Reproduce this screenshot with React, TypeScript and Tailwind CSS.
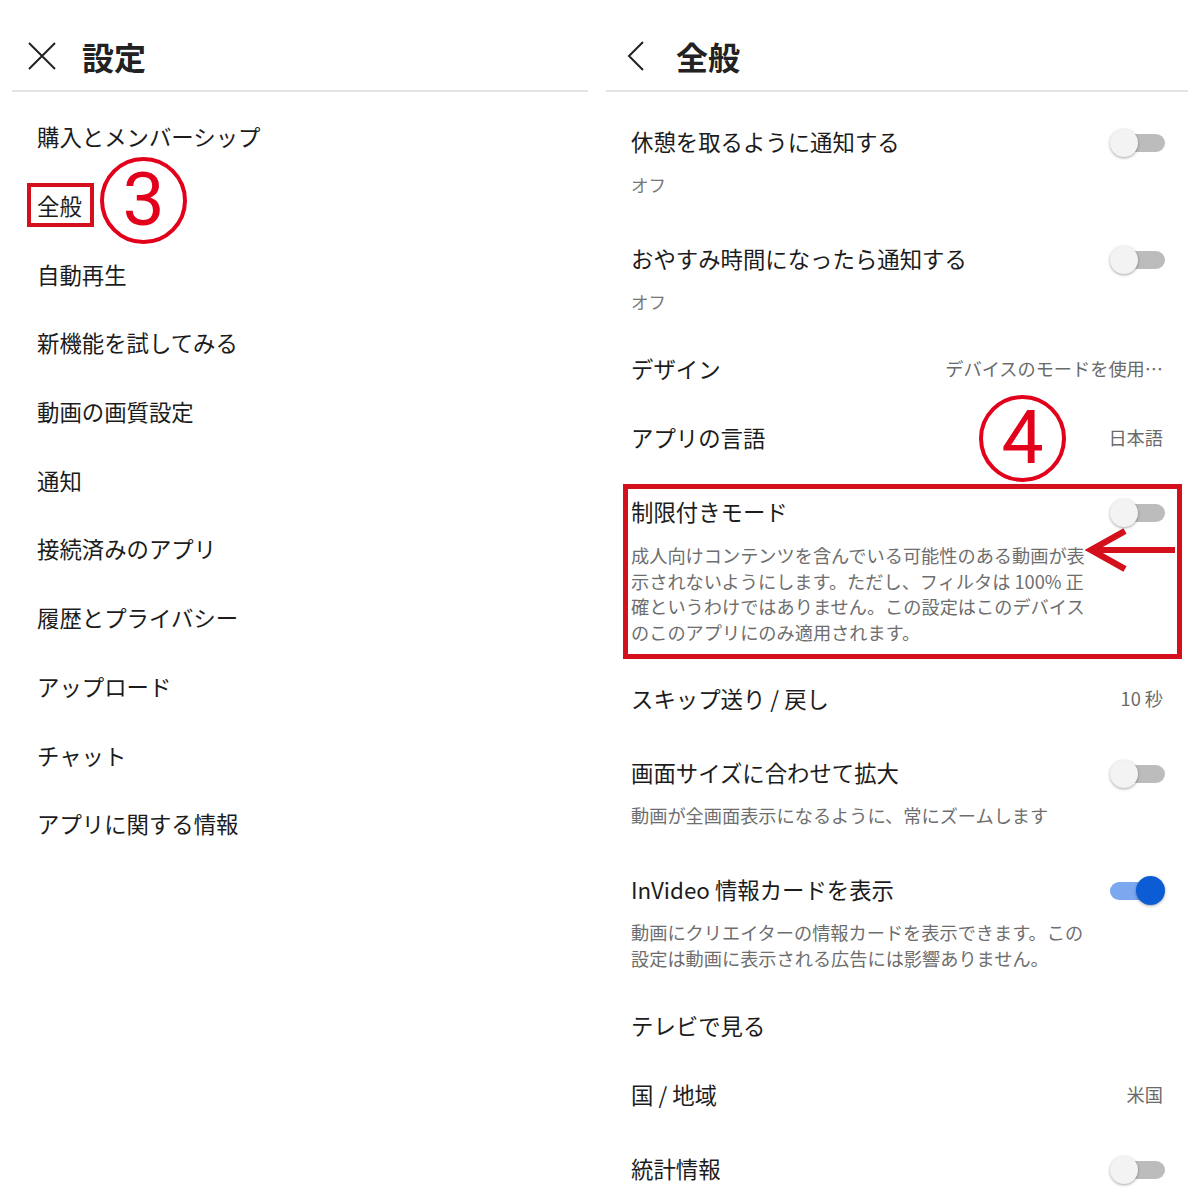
import React from "react";

type Right =
  | { kind: "toggle"; on: boolean }
  | { kind: "value"; text: string }
  | { kind: "none" };

type Row = {
  title: string;
  sub?: string;
  desc?: string[];
  right: Right;
  /** distance to the next row's title, written out so Tailwind sees it */
  h: string;
};

const MENU = [
  "購入とメンバーシップ",
  "全般",
  "自動再生",
  "新機能を試してみる",
  "動画の画質設定",
  "通知",
  "接続済みのアプリ",
  "履歴とプライバシー",
  "アップロード",
  "チャット",
  "アプリに関する情報",
];

const ROWS_TOP: Row[] = [
  { title: "休憩を取るように通知する", sub: "オフ", right: { kind: "toggle", on: false }, h: "h-[117px]" },
  { title: "おやすみ時間になったら通知する", sub: "オフ", right: { kind: "toggle", on: false }, h: "h-[110px]" },
  { title: "デザイン", right: { kind: "value", text: "デバイスのモードを使用…" }, h: "h-[69px]" },
  { title: "アプリの言語", right: { kind: "value", text: "日本語" }, h: "h-[74px]" },
];

const ROWS_BOTTOM: Row[] = [
  { title: "スキップ送り / 戻し", right: { kind: "value", text: "10 秒" }, h: "h-[74px]" },
  {
    title: "画面サイズに合わせて拡大",
    desc: ["動画が全画面表示になるように、常にズームします"],
    right: { kind: "toggle", on: false },
    h: "h-[117px]",
  },
  {
    title: "InVideo 情報カードを表示",
    desc: [
      "動画にクリエイターの情報カードを表示できます。この",
      "設定は動画に表示される広告には影響ありません。",
    ],
    right: { kind: "toggle", on: true },
    h: "h-[136px]",
  },
  { title: "テレビで見る", right: { kind: "none" }, h: "h-[69px]" },
  { title: "国 / 地域", right: { kind: "value", text: "米国" }, h: "h-[74px]" },
  { title: "統計情報", right: { kind: "toggle", on: false }, h: "h-[74px]" },
];

function Toggle({ on }: { on: boolean }) {
  return (
    <div className="relative h-[30px] w-[55px] shrink-0 translate-y-[2px]">
      <div
        className={
          on
            ? "absolute left-0 right-[4px] top-[6px] h-[18px] rounded-full bg-[#7ba8ef]"
            : "absolute left-[4px] right-0 top-[6px] h-[18px] rounded-full bg-[#bcbcbc]"
        }
      />
      <div
        className={
          on
            ? "absolute right-0 top-[0px] h-[29px] w-[29px] rounded-full bg-[#0b5cd5] shadow-[0_1px_3px_rgba(0,0,0,0.35)]"
            : "absolute left-0 top-[1px] h-[28px] w-[28px] rounded-full bg-[#f3f3f3] shadow-[0_1px_3px_rgba(0,0,0,0.35)]"
        }
      />
    </div>
  );
}

function RightSide({ right }: { right: Right }) {
  if (right.kind === "toggle") return <Toggle on={right.on} />;
  if (right.kind === "value")
    return <span className="pr-[2px] text-[18.2px] leading-[30px] text-[#6a6a6a]">{right.text}</span>;
  return null;
}

function TitleLine({ row }: { row: Row }) {
  return (
    <div className="flex h-[30px] items-center justify-between">
      <span className="text-[22.4px] leading-[30px] text-[#1c1c1c]">{row.title}</span>
      <RightSide right={row.right} />
    </div>
  );
}

function Desc({ lines, gap = "mt-[16px]" }: { lines: string[]; gap?: string }) {
  return (
    <div className={`${gap} text-[18.2px] leading-[25.7px] text-[#6e6e6e]`}>
      {lines.map((l) => (
        <div key={l} className="whitespace-nowrap">
          {l}
        </div>
      ))}
    </div>
  );
}

function SettingRow({ row }: { row: Row }) {
  return (
    <div className={`${row.h} pt-[20px]`}>
      <TitleLine row={row} />
      {row.sub && (
        <div className="mt-[16px] text-[17.5px] leading-[26px] text-[#777]">{row.sub}</div>
      )}
      {row.desc && <Desc lines={row.desc} />}
    </div>
  );
}

function Circled({ n }: { n: string }) {
  return (
    <div className="flex h-[87px] w-[87px] items-center justify-center rounded-full border-[4.5px] border-[#e2001a]">
      <span className="font-['Roboto',sans-serif] text-[75px] font-normal leading-none text-[#e2001a] -translate-y-[1px]">
        {n}
      </span>
    </div>
  );
}

function LeftPanel() {
  return (
    <div className="relative w-[600px] px-[12px]">
      <div className="flex h-[92px] items-center border-b-2 border-[#e3e3e3] pt-[22px]">
        <svg width="30" height="30" viewBox="0 0 30 30" className="ml-[15px]" fill="none">
          <path d="M2 2 L28 28 M28 2 L2 28" stroke="#222" strokeWidth="2" />
        </svg>
        <span className="ml-[25px] text-[32px] font-bold leading-none text-[#222]">設定</span>
      </div>
      <div className="pt-[10px]">
        {MENU.map((m) => (
          <div key={m} className="flex h-[68.7px] items-center px-[25px]">
            {m === "全般" ? (
              <span className="-ml-[10px] border-4 border-[#d3101c] py-[3px] pl-[6px] pr-[8px] text-[22.4px] leading-[30px] text-[#1c1c1c]">
                {m}
              </span>
            ) : (
              <span className="text-[22.4px] leading-[30px] text-[#1c1c1c]">{m}</span>
            )}
          </div>
        ))}
      </div>
      {/* annotation ③ */}
      <div className="absolute left-[100px] top-[157px]">
        <Circled n="3" />
      </div>
    </div>
  );
}

function RightPanel() {
  return (
    <div className="relative w-[600px] pl-[6px] pr-[12px]">
      <div className="flex h-[92px] items-center border-b-2 border-[#e3e3e3] pt-[22px]">
        <svg width="20" height="30" viewBox="0 0 20 30" className="ml-[20px]" fill="none">
          <path d="M17 1 L3 15 L17 29" stroke="#222" strokeWidth="2" />
        </svg>
        <span className="ml-[30px] text-[32px] font-bold leading-none text-[#222]">全般</span>
      </div>
      <div className="pl-[25px] pr-[23px] pt-[14px]">
        {ROWS_TOP.map((r) => (
          <SettingRow key={r.title} row={r} />
        ))}

        {/* restricted mode, boxed in red */}
        <div className="h-[187px] pt-[8px]">
          <div className="relative -ml-[8px] -mr-[17px] h-[175px] border-[5px] border-[#d3101c] pl-[3px] pr-[12px] pt-[7px]">
            <TitleLine row={{ title: "制限付きモード", right: { kind: "toggle", on: false }, h: "" }} />
            <Desc
              gap="mt-[17px]"
              lines={[
                "成人向けコンテンツを含んでいる可能性のある動画が表",
                "示されないようにします。ただし、フィルタは 100% 正",
                "確というわけではありません。この設定はこのデバイス",
                "のこのアプリにのみ適用されます。",
              ]}
            />
            <svg
              width="90"
              height="46"
              viewBox="0 0 90 46"
              className="absolute left-[457px] top-[38px]"
              fill="none"
            >
              <path d="M6 23 H90" stroke="#d3101c" strokeWidth="6" />
              <path d="M40 4 L6 23 L40 42" stroke="#d3101c" strokeWidth="6.5" />
            </svg>
          </div>
        </div>

        {ROWS_BOTTOM.map((r) => (
          <SettingRow key={r.title} row={r} />
        ))}
      </div>
      {/* annotation ④ */}
      <div className="absolute left-[379px] top-[395px]">
        <Circled n="4" />
      </div>
    </div>
  );
}

export default function App() {
  return (
    <div className="flex h-[1200px] w-[1200px] overflow-hidden bg-white font-['Noto_Sans_CJK_JP','Noto_Sans',sans-serif]">
      <LeftPanel />
      <RightPanel />
    </div>
  );
}
